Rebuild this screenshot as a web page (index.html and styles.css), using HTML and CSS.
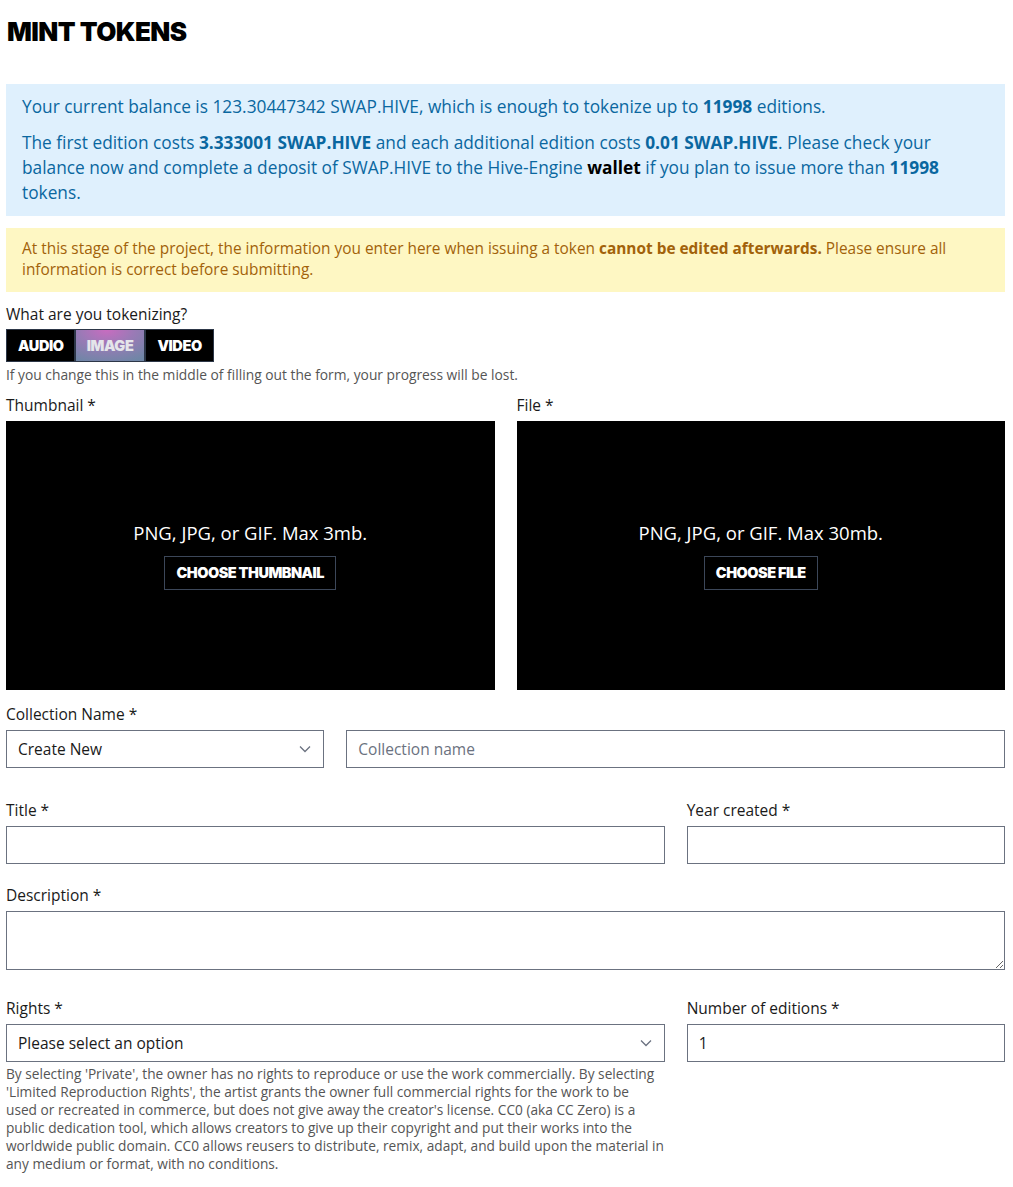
FILE: index.html
```html
<!DOCTYPE html>
<html lang="en">
<head>
<meta charset="utf-8">
<title>Mint Tokens</title>
<link rel="stylesheet" href="styles.css">
</head>
<body>
<main class="page">
  <h1 class="title">MINT TOKENS</h1>

  <div class="info">
    <p>Your current balance is 123.30447342 SWAP.HIVE, which is enough to tokenize up to <b>11998</b> editions.</p>
    <p>The first edition costs <b>3.333001 SWAP.HIVE</b> and each additional edition costs <b>0.01 SWAP.HIVE</b>. Please check your balance now and complete a deposit of SWAP.HIVE to the Hive-Engine <a class="wallet" href="#">wallet</a> if you plan to issue more than <b>11998</b> tokens.</p>
  </div>

  <div class="warning">
    At this stage of the project, the information you enter here when issuing a token <b>cannot be edited afterwards.</b> Please ensure all information is correct before submitting.
  </div>

  <div class="kind">
    <div class="label">What are you tokenizing?</div>
    <div class="tabs">
      <button class="tab">AUDIO</button>
      <button class="tab active">IMAGE</button>
      <button class="tab">VIDEO</button>
    </div>
    <div class="help">If you change this in the middle of filling out the form, your progress will be lost.</div>
  </div>

  <div class="grid2 uploads">
    <div class="field">
      <div class="label">Thumbnail *</div>
      <div class="drop">
        <div class="drop-text">PNG, JPG, or GIF. Max 3mb.</div>
        <button class="choose">CHOOSE THUMBNAIL</button>
      </div>
    </div>
    <div class="field">
      <div class="label">File *</div>
      <div class="drop">
        <div class="drop-text">PNG, JPG, or GIF. Max 30mb.</div>
        <button class="choose">CHOOSE FILE</button>
      </div>
    </div>
  </div>

  <div class="grid3 row-collection">
    <div class="field">
      <div class="label">Collection Name *</div>
      <div class="select">
        <span>Create New</span>
        <svg class="chev" width="12" height="8" viewBox="0 0 12 8"><path d="M1 1.5 L6 6.5 L11 1.5" fill="none" stroke="#6b7280" stroke-width="1.3"/></svg>
      </div>
    </div>
    <div class="field span2 nolabel">
      <input class="input" type="text" placeholder="Collection name">
    </div>
  </div>

  <div class="grid3 row-title">
    <div class="field span2">
      <div class="label">Title *</div>
      <input class="input" type="text">
    </div>
    <div class="field">
      <div class="label">Year created *</div>
      <input class="input" type="text">
    </div>
  </div>

  <div class="field row-desc">
    <div class="label">Description *</div>
    <textarea class="textarea"></textarea>
  </div>

  <div class="grid3 row-rights">
    <div class="field span2">
      <div class="label">Rights *</div>
      <div class="select">
        <span>Please select an option</span>
        <svg class="chev" width="12" height="8" viewBox="0 0 12 8"><path d="M1 1.5 L6 6.5 L11 1.5" fill="none" stroke="#6b7280" stroke-width="1.3"/></svg>
      </div>
      <div class="help rights-help">
        <span class="ln">By selecting 'Private', the owner has no rights to reproduce or use the work commercially. By selecting</span>
        <span class="ln">'Limited Reproduction Rights', the artist grants the owner full commercial rights for the work to be</span>
        <span class="ln">used or recreated in commerce, but does not give away the creator's license. CC0 (aka CC Zero) is a</span>
        <span class="ln">public dedication tool, which allows creators to give up their copyright and put their works into the</span>
        <span class="ln">worldwide public domain. CC0 allows reusers to distribute, remix, adapt, and build upon the material in</span>
        <span class="ln">any medium or format, with no conditions.</span>
      </div>
    </div>
    <div class="field">
      <div class="label">Number of editions *</div>
      <input class="input" type="text" value="1">
    </div>
  </div>
</main>
</body>
</html>
```

FILE: styles.css
```css
* { box-sizing: border-box; }
html, body { margin: 0; padding: 0; background: #fff; }
body {
  font-family: "Open Sans", "Noto Sans", sans-serif;
  color: #1a1a1a;
}
.page {
  padding: 0 8px 20px 6px;
}
.title {
  font-family: "Inter", "Lato", sans-serif;
  font-weight: 900;
  font-size: 26px;
  letter-spacing: -0.55px;
  line-height: 32px;
  margin: 0;
  padding: 16px 0 36px 1px;
  color: #000;
}
.info {
  background: #dff0fd;
  color: #0a67a0;
  font-size: 17.3px;
  line-height: 25px;
  padding: 10px 16px 11px;
}
.info p { margin: 0; }
.info p + p { margin-top: 11px; }
.info b { font-weight: 700; }
.wallet { color: #000; font-weight: 700; text-decoration: none; }
.warning {
  margin-top: 12px;
  background: #fef7c3;
  color: #a2620a;
  font-size: 15.4px;
  line-height: 21px;
  padding: 10px 16px 12px;
}
.warning b { font-weight: 700; }
.kind { margin-top: 12px; }
.label {
  font-size: 15.5px;
  line-height: 20px;
  color: #1a1a1a;
  margin-bottom: 6px;
}
.kind .label { margin-bottom: 5px; }
.tabs {
  display: inline-flex;
  border: 1px solid #2d3748;
  background: #000;
}
.tab {
  font-family: "Inter", "Lato", sans-serif;
  font-weight: 900;
  font-size: 14.5px;
  letter-spacing: -0.4px;
  color: #fff;
  background: #000;
  border: 0;
  border-left: 2px solid #2d3748;
  height: 31px;
  padding: 0 11px;
  margin: 0;
  cursor: pointer;
}
.tab:first-child { border-left: 0; padding: 0 10px 0 11px; }
.tab.active {
  background: radial-gradient(ellipse 90% 110% at 45% 0%, #c86cc0 0%, #9a7ab6 45%, #6f86a6 100%);
  color: #e5e5ea;
}
.help {
  font-size: 13.8px;
  line-height: 18px;
  color: #555;
  margin-top: 4px;
}
.grid2 {
  display: grid;
  grid-template-columns: 1fr 1fr;
  column-gap: 22px;
}
.grid3 {
  display: grid;
  grid-template-columns: 1fr 1fr 1fr;
  column-gap: 22px;
}
.span2 { grid-column: span 2; }
.uploads { margin-top: 11px; }
.drop {
  background: #000;
  height: 269px;
  display: flex;
  flex-direction: column;
  align-items: center;
  justify-content: center;
  gap: 12px;
}
.drop-text {
  color: #fff;
  font-size: 18.5px;
  line-height: 22px;
}
.choose {
  font-family: "Inter", "Lato", sans-serif;
  font-weight: 900;
  font-size: 14.5px;
  letter-spacing: -0.5px;
  color: #fff;
  background: #000;
  border: 1px solid #3c4759;
  height: 34px;
  padding: 0 11px;
}
.row-collection { margin-top: 14px; }
.nolabel { padding-top: 26px; }
.input, .select, .textarea {
  display: flex;
  align-items: center;
  width: 100%;
  height: 38px;
  border: 1px solid #6b7280;
  border-radius: 0;
  background: #fff;
  font-family: inherit;
  font-size: 15.5px;
  color: #1a1a1a;
  padding: 0 11px;
  margin: 0;
  outline: none;
}
.input::placeholder { color: #6b7280; }
.select { justify-content: space-between; padding-right: 12px; }
.chev { display: block; }
.row-title { margin-top: 32px; }
.row-desc { margin-top: 21px; }
.textarea {
  display: block;
  height: 59px;
  resize: vertical;
}
.row-rights { margin-top: 28px; }
.rights-help { margin-top: 3px; font-size: 13.7px; }
.rights-help .ln { display: block; white-space: nowrap; }
```
